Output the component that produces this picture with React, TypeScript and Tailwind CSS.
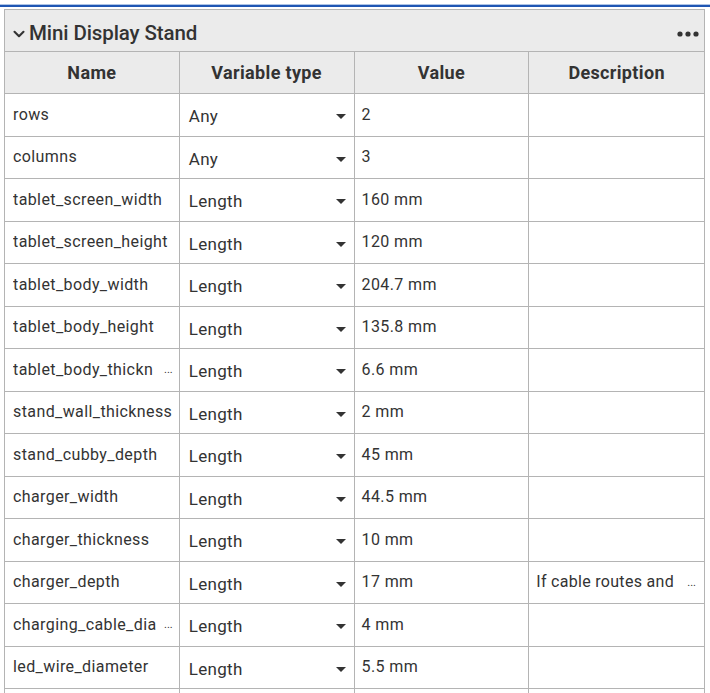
import { ChevronDown } from "lucide-react";

type Row = { name: string; cut?: boolean; type: string; value: string; desc?: string };

const ROWS: Row[] = [
  { name: "rows", type: "Any", value: "2" },
  { name: "columns", type: "Any", value: "3" },
  { name: "tablet_screen_width", type: "Length", value: "160 mm" },
  { name: "tablet_screen_height", type: "Length", value: "120 mm" },
  { name: "tablet_body_width", type: "Length", value: "204.7 mm" },
  { name: "tablet_body_height", type: "Length", value: "135.8 mm" },
  { name: "tablet_body_thickn", cut: true, type: "Length", value: "6.6 mm" },
  { name: "stand_wall_thickness", type: "Length", value: "2 mm" },
  { name: "stand_cubby_depth", type: "Length", value: "45 mm" },
  { name: "charger_width", type: "Length", value: "44.5 mm" },
  { name: "charger_thickness", type: "Length", value: "10 mm" },
  { name: "charger_depth", type: "Length", value: "17 mm", desc: "If cable routes and" },
  { name: "charging_cable_dia", cut: true, type: "Length", value: "4 mm" },
  { name: "led_wire_diameter", type: "Length", value: "5.5 mm" },
  { name: "", type: "", value: "" },
];

const HEADERS = ["Name", "Variable type", "Value", "Description"];

function Caret() {
  return (
    <svg width="10" height="5" viewBox="0 0 10 5" className="shrink-0">
      <path d="M0 0h10L5 5z" fill="#333" />
    </svg>
  );
}

function Dots() {
  return (
    <svg width="22" height="6" viewBox="0 0 22 6">
      <circle cx="3" cy="3" r="2.6" fill="#333" />
      <circle cx="11" cy="3" r="2.6" fill="#333" />
      <circle cx="19" cy="3" r="2.6" fill="#333" />
    </svg>
  );
}

export default function App() {
  return (
    <div
      className="h-[693px] w-[710px] overflow-hidden bg-white pt-1 text-[#333]"
      style={{ fontFamily: "Roboto, 'Noto Sans', sans-serif" }}
    >
      {/* accent line */}
      <div className="h-px bg-[#aec4e6]" />
      <div className="h-[2px] bg-[#1f56b3]" />

      <div className="ml-1 mr-[5px] mt-[2px] border border-[#b4b4b4]">
        {/* panel title */}
        <div className="flex h-[41px] items-center bg-[#ebebeb] pl-[5px] pr-[4px] pt-[6px]">
          <ChevronDown size={18} strokeWidth={2.8} className="mr-[1px] text-[#333]" />
          <span className="text-[20.5px] font-medium leading-none tracking-[-0.1px]">Mini Display Stand</span>
          <span className="ml-auto mr-[1px] mt-[1px]">
            <Dots />
          </span>
        </div>

        {/* table */}
        <div className="grid grid-cols-4 border-t border-[#b4b4b4]">
          {HEADERS.map((h, i) => (
            <div
              key={h}
              className={`flex h-[42px] items-center justify-center border-b border-[#b4b4b4] bg-[#ebebeb] text-[18px] font-bold tracking-[0.35px] ${
                i < 3 ? "border-r" : ""
              }`}
            >
              {h}
            </div>
          ))}

          {ROWS.map((r, idx) => (
            <div key={idx} className="contents">
              <div className="flex h-[42.5px] items-center border-b border-r border-[#b4b4b4] pl-[8px] pr-[6px] text-[16px] tracking-[0.4px]">
                <span className="truncate">{r.name}</span>
                {r.cut && <span className="ml-auto text-[11px] leading-none tracking-normal">...</span>}
              </div>
              <div className="flex h-[42.5px] items-center border-b border-r border-[#b4b4b4] pl-[9px] pr-[8px] pt-[4px] text-[17px] tracking-[0.3px]">
                <span>{r.type}</span>
                {r.type && (
                  <span className="ml-auto">
                    <Caret />
                  </span>
                )}
              </div>
              <div className="flex h-[42.5px] items-center border-b border-r border-[#b4b4b4] pl-[7px] text-[16px] tracking-[0.4px]">
                {r.value}
              </div>
              <div className="flex h-[42.5px] items-center border-b border-[#b4b4b4] pl-[7px] pr-[8px] text-[16px] tracking-[0.3px]">
                {r.desc && (
                  <>
                    <span className="truncate">{r.desc}</span>
                    <span className="ml-auto text-[11px] leading-none tracking-normal">...</span>
                  </>
                )}
              </div>
            </div>
          ))}
        </div>
      </div>
    </div>
  );
}
